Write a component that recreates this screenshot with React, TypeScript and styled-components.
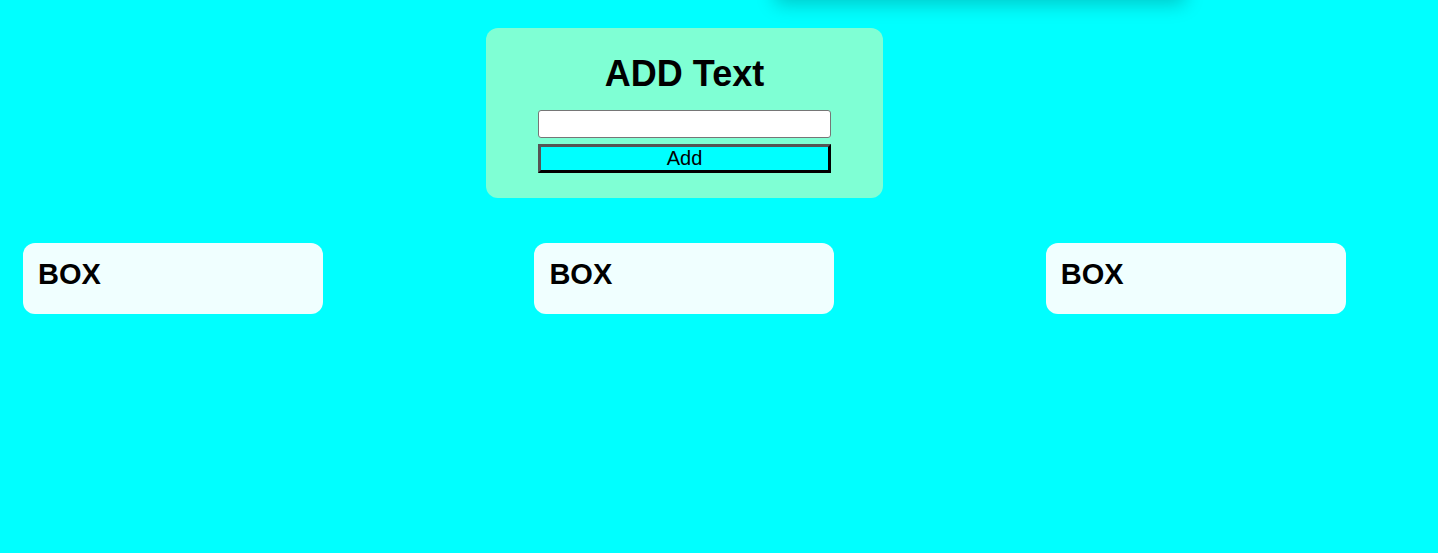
import React from "react"
import styled, { createGlobalStyle } from "styled-components"

const GlobalStyle = createGlobalStyle`
    html, body {
        margin: 0;
        background: #00ffff;
        font-family: "Liberation Sans", Arial, sans-serif;
        overflow: hidden;
    }
    body {
        padding: 8px;
        height: 553px;
        box-sizing: border-box;
    }
`

const Page = styled.div`
    position: relative;
    display: flex;
    flex-direction: column;
`

const TopShadow = styled.div`
    position: absolute;
    top: -108px;
    left: 767px;
    width: 410px;
    height: 100px;
    background: #00ffff;
    box-shadow: 0 4px 18px rgba(0, 0, 0, 0.22);
`

const FormCard = styled.div`
    margin: 20px 0 0 478px;
    width: 397px;
    height: 170px;
    box-sizing: border-box;
    padding-top: 25px;
    background: #7fffd4;
    border-radius: 12px;
    display: flex;
    flex-direction: column;
    align-items: center;
`

const Title = styled.h1`
    margin: 0 0 16px;
    font-size: 36px;
    line-height: 41px;
    font-weight: bold;
    color: #000;
`

const TextInput = styled.input`
    width: 293px;
    height: 28px;
    box-sizing: border-box;
    margin: 0 0 6px;
    padding: 1px 4px;
    border: 1px solid #767676;
    border-radius: 3px;
    background: #fff;
    font-family: "Liberation Sans", Arial, sans-serif;
    font-size: 18px;
`

const AddButton = styled.button`
    width: 293px;
    height: 29px;
    box-sizing: border-box;
    padding: 0;
    border: 3px solid;
    border-color: #555 #000 #000 #555;
    background: #00ffff;
    color: #000;
    font-family: "Liberation Sans", Arial, sans-serif;
    font-size: 20px;
    line-height: 23px;
`

const BoxRow = styled.div`
    display: flex;
    gap: 211.4px;
    margin: 45px 0 0 15px;
`

const Box = styled.div`
    flex: none;
    width: 300px;
    height: 71px;
    box-sizing: border-box;
    padding: 15px 15px 0;
    background: #f0ffff;
    border-radius: 12px;
`

const BoxTitle = styled.h2`
    margin: 0;
    font-size: 29px;
    line-height: 33px;
    font-weight: bold;
    color: #000;
`

const App = () => {
    const boxes = ["BOX", "BOX", "BOX"]
    return (
        <Page>
            <GlobalStyle />
            <TopShadow />
            <FormCard>
                <Title>ADD Text</Title>
                <TextInput type="text" />
                <AddButton>Add</AddButton>
            </FormCard>
            <BoxRow>
                {boxes.map((b, i) => (
                    <Box key={i}>
                        <BoxTitle>{b}</BoxTitle>
                    </Box>
                ))}
            </BoxRow>
        </Page>
    )
}

export default App
